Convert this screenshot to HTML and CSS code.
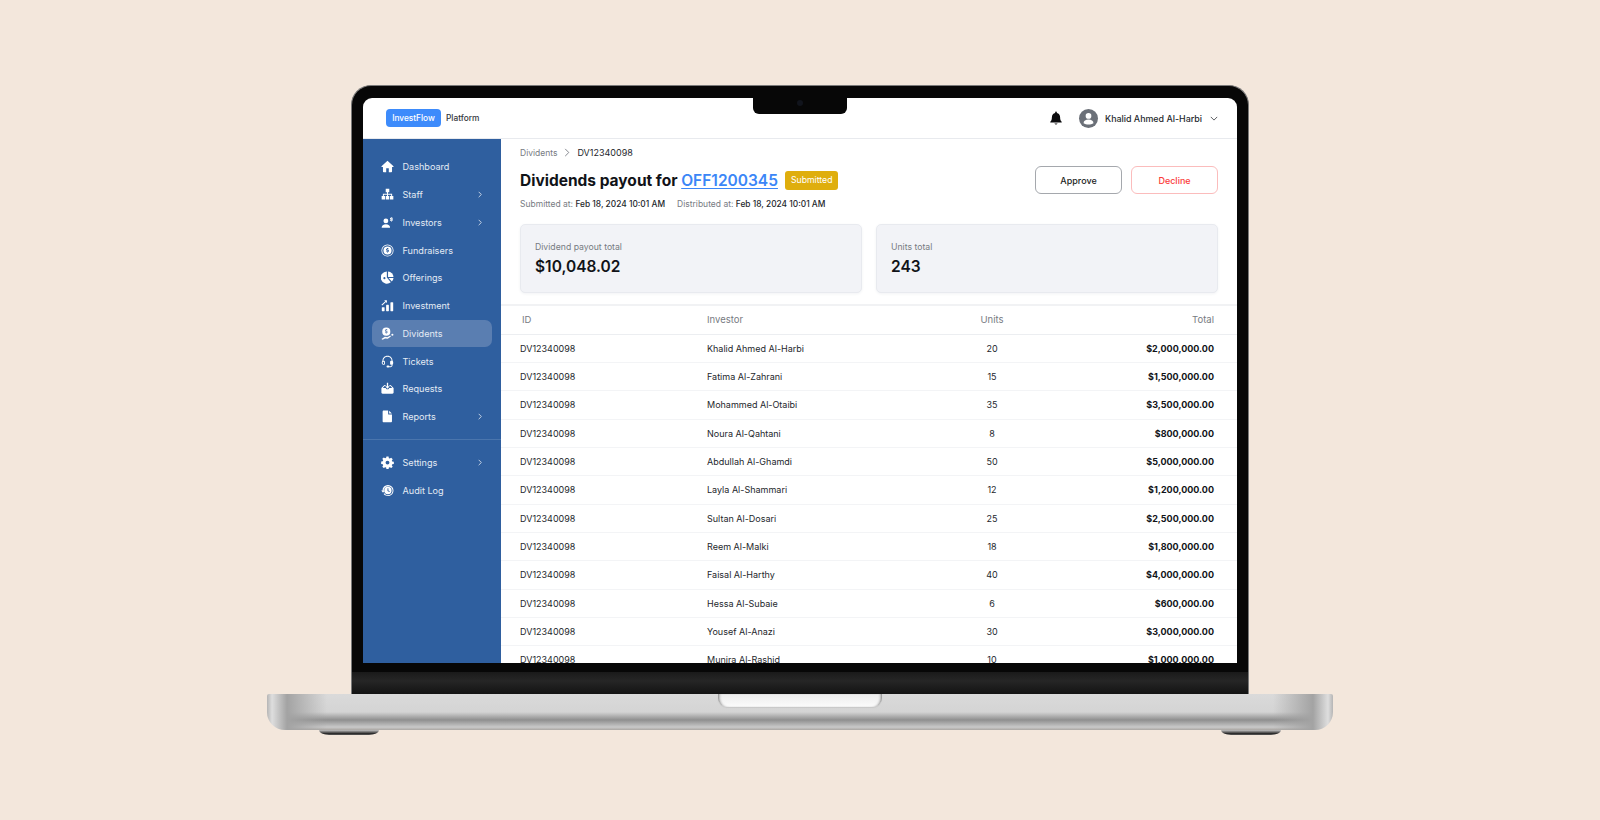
FILE: index.html
```html
<!DOCTYPE html>
<html lang="en">
<head>
    <meta charset="UTF-8">
    <title>InvestFlow Platform</title>
    <link rel="stylesheet" href="styles.css">
</head>
<body>
    <div class="laptop">
        <div class="lid">
            <div class="notch"><span class="camera"></span></div>
            <div class="screen">
                <header class="topbar">
                    <div class="brand">
                        <span class="brand-badge">InvestFlow</span>
                        <span class="brand-name">Platform</span>
                    </div>
                    <div class="topbar-right">
                        <svg class="bell" viewBox="0 0 16 16"><path d="M8 0.600c-.6 0-1 .4-1 1v.6C4.700 2.700 3.300 4.600 3.300 7c0 2.600-.6 3.800-1.800 5.200-.3.400-.1 1 .5 1h12c.6 0 .8-.6.5-1C13.300 10.800 12.700 9.600 12.700 7c0-2.400-1.400-4.300-3.700-4.800v-.6c0-.6-.4-1-1-1zM6.200 14.200a1.900 1.900 0 0 0 3.600 0z"/></svg>
                        <span class="avatar">
                            <svg viewBox="0 0 20 20"><circle cx="10" cy="7.300" r="3"/><path d="M4.800 15c0-2.800 2.300-4 5.200-4s5.200 1.200 5.200 4c-1.400.9-3.200 1.400-5.200 1.400s-3.800-.5-5.200-1.400z"/></svg>
                        </span>
                        <span class="user-name">Khalid Ahmed Al-Harbi</span>
                        <svg class="user-caret" viewBox="0 0 10 6"><path d="M1 1l4 4 4-4"/></svg>
                    </div>
                </header>
                <div class="app">
                    <nav class="sidebar">
                        <div class="nav-group">
                            <a class="nav-item">
                                <svg class="nav-icon" viewBox="0 0 16 16"><path d="M8 1L.6 7.700c-.3.300-.1.800.3.800H2.400V14c0 .5.400 1 1 1h3V10.300h3.200V15h3c.6 0 1-.5 1-1V8.500h1.500c.4 0 .6-.5.300-.8z"/></svg>
                                <span>Dashboard</span>
                            </a>
                            <a class="nav-item">
                                <svg class="nav-icon" viewBox="0 0 16 16"><path d="M5.800 1h4.400v4.200H8.600v2h5.100v2.600h1.500V14h-4.200V9.800h1.500V8.400H8.600v1.400h1.500V14H5.900V9.800h1.500V8.400H3.500v1.400H5V14H.8V9.800h1.500V7.200h5.100v-2H5.800z"/></svg>
                                <span>Staff</span>
                                <svg class="nav-arrow" viewBox="0 0 6 10"><path d="M1 1l4 4-4 4"/></svg>
                            </a>
                            <a class="nav-item">
                                <svg class="nav-icon" viewBox="0 0 16 16"><circle cx="6" cy="6" r="3"/><path d="M.8 14.500c0-3 2-4.500 5.200-4.500s5.200 1.500 5.200 4.500z"/><path d="M12.200 1.500h1.100v.8h1.200v1h-2c-.3 0-.3.400 0 .4h1c1.500 0 1.500 2.300 0 2.400v.8h-1.100v-.8H11v-1h2.200c.3 0 .3-.4 0-.4h-1c-1.500 0-1.500-2.300 0-2.400z"/></svg>
                                <span>Investors</span>
                                <svg class="nav-arrow" viewBox="0 0 6 10"><path d="M1 1l4 4-4 4"/></svg>
                            </a>
                            <a class="nav-item">
                                <svg class="nav-icon" viewBox="0 0 16 16"><path fill-rule="evenodd" d="M8 .5a7.500 7.500 0 1 1 0 15 7.500 7.500 0 0 1 0-15zm0 1a6.500 6.500 0 1 0 0 13 6.500 6.500 0 0 0 0-13zm0 1.500a5 5 0 1 1 0 10A5 5 0 0 1 8 3zm.6 1.800H7.400v.7c-1.800.3-1.700 2.600 0 2.800h1.100c.4 0 .4.500 0 .5H6.600v1h.8v.7h1.200v-.7c1.800-.3 1.700-2.600 0-2.800H7.500c-.4 0-.4-.5 0-.5h1.900v-1h-.8z"/></svg>
                                <span>Fundraisers</span>
                            </a>
                            <a class="nav-item">
                                <svg class="nav-icon" viewBox="0 0 16 16"><path fill-rule="evenodd" d="M7.200 .6v7.500l4.900 5.700A7.500 7.500 0 1 1 7.200 .6zM4.200 7.500a1.300 1.300 0 1 0 0 2.600 1.300 1.300 0 0 0 0-2.600z"/><path d="M8.700 .6a7 7 0 0 1 6.700 6.700H8.700z"/><path d="M9.300 8.700h6.100a7.400 7.400 0 0 1-2.100 4.300z"/></svg>
                                <span>Offerings</span>
                            </a>
                            <a class="nav-item">
                                <svg class="nav-icon" viewBox="0 0 16 16"><rect x="1" y="10" width="3.400" height="5" rx=".6"/><rect x="6.300" y="7" width="3.400" height="8" rx=".6"/><rect x="11.600" y="4" width="3.400" height="11" rx=".6"/><path d="M1 7.500l5-4.500" stroke="#fff" stroke-width="1.300" fill="none"/><path d="M3.900 1.500h3.300v3.300z"/></svg>
                                <span>Investment</span>
                            </a>
                            <a class="nav-item active">
                                <svg class="nav-icon" viewBox="0 0 16 16"><path fill-rule="evenodd" d="M6.500 .7a5 5 0 1 1 0 10 5 5 0 0 1 0-10zm.6 1.800H5.900v.6c-1.500.4-1.400 2.300 0 2.600l1.200.2c.3 0 .3.500 0 .5H5.200v1h.7v.6h1.200V7.400c1.500-.4 1.400-2.300 0-2.600l-1.200-.2c-.3 0-.3-.5 0-.5h1.900v-1h-.7z"/><path d="M.5 14.800l4.300-2.800 3 .6 3.200-1.800c.8-.4 1.500.6.800 1.200l-3.500 2.500-3.300-.5-3 1.800zM12.700 9.500a1.300 1.300 0 1 1 2.600 0 1.300 1.300 0 0 1-2.600 0z"/></svg>
                                <span>Dividents</span>
                            </a>
                            <a class="nav-item">
                                <svg class="nav-icon" viewBox="0 0 16 16"><path d="M8 1C4.300 1 1.800 3.700 1.800 7.300v.6h1.100v-.6C2.900 4.300 5 2.100 8 2.100s5.100 2.200 5.100 5.200v5c0 1-.7 1.600-1.600 1.600H9.900V15h1.600c1.600 0 2.700-1.100 2.700-2.700v-5C14.200 3.700 11.700 1 8 1z"/><path fill-rule="evenodd" d="M2.800 7.200h1c.6 0 1 .4 1 1v2.900c0 .6-.4 1-1 1h-1c-1 0-1.800-.8-1.800-1.800V9c0-1 .8-1.800 1.800-1.800zm.1 1.100c-.5 0-.8.300-.8.800v1.100c0 .5.300.8.800.8h.8V8.300zM12.200 7.200h1c1 0 1.800.8 1.800 1.800v1.300c0 1-.8 1.800-1.800 1.800h-1c-.6 0-1-.4-1-1V8.200c0-.6.4-1 1-1z"/><rect x="6.800" y="13" width="3.400" height="2.400" rx="1.200"/></svg>
                                <span>Tickets</span>
                            </a>
                            <a class="nav-item">
                                <svg class="nav-icon" viewBox="0 0 16 16"><path d="M7.200 1h1.600v4.200h1.900L8 8.200 5.300 5.200h1.900z"/><path d="M4.200 3.600h1.600v1H4.700L2.200 7.300h3.500L7 9h2l1.300-1.700h3.500l-2.500-2.700h-1.100v-1h1.600L15.500 7.500V13c0 .8-.6 1.500-1.500 1.500H2C1.100 14.500.5 13.800.5 13V7.500z"/></svg>
                                <span>Requests</span>
                            </a>
                            <a class="nav-item">
                                <svg class="nav-icon" viewBox="0 0 16 16"><path d="M3.300.7h5.500v4.200c0 .4.300.7.700.7h4v8.300c0 .7-.6 1.300-1.300 1.300H3.300c-.7 0-1.300-.6-1.300-1.300V2c0-.7.600-1.300 1.300-1.300z"/><path d="M10 .9l3.400 3.500H10z"/></svg>
                                <span>Reports</span>
                                <svg class="nav-arrow" viewBox="0 0 6 10"><path d="M1 1l4 4-4 4"/></svg>
                            </a>
                        </div>
                        <div class="nav-group nav-bottom">
                            <a class="nav-item">
                                <svg class="nav-icon" viewBox="0 0 16 16"><path fill-rule="evenodd" d="M6.700.7h2.600l.4 2 1.100.5 1.800-1.100 1.800 1.800-1.100 1.800.5 1.100 2 .4v2.600l-2 .4-.5 1.100 1.100 1.800-1.800 1.800-1.800-1.100-1.100.5-.4 2H6.700l-.4-2-1.100-.5-1.800 1.100-1.800-1.800 1.100-1.800-.5-1.100-2-.4V6.800l2-.4.5-1.100-1.100-1.800 1.800-1.800 1.800 1.100 1.100-.5zM8 5.700a2.400 2.400 0 1 0 0 4.800 2.400 2.400 0 0 0 0-4.800z"/></svg>
                                <span>Settings</span>
                                <svg class="nav-arrow" viewBox="0 0 6 10"><path d="M1 1l4 4-4 4"/></svg>
                            </a>
                            <a class="nav-item">
                                <svg class="nav-icon" viewBox="0 0 16 16"><path fill-rule="evenodd" d="M8.500 1.200a6.800 6.800 0 1 1-5.300 11l1-.8a5.500 5.500 0 1 0-1-3.400h1.500L2.500 10.800.3 8h1.500A6.800 6.800 0 0 1 8.500 1.200zm0 2.300a4.500 4.500 0 1 1 0 9 4.500 4.500 0 0 1 0-9zM8 5.200v3.300l2.300 1.400.6-.9-1.800-1.100V5.200z"/></svg>
                                <span>Audit Log</span>
                            </a>
                        </div>
                    </nav>
                    <main class="content">
                        <div class="page-head">
                            <div class="breadcrumb">
                                <span class="crumb">Dividents</span>
                                <svg class="crumb-sep" viewBox="0 0 6 10"><path d="M1 1l4 4-4 4"/></svg>
                                <span class="crumb-current">DV12340098</span>
                            </div>
                            <div class="title-row">
                                <div class="title-left">
                                    <h1>Dividends payout for <a class="offer-link">OFF1200345</a></h1>
                                    <span class="status">Submitted</span>
                                </div>
                                <div class="actions">
                                    <button class="btn btn-approve">Approve</button>
                                    <button class="btn btn-decline">Decline</button>
                                </div>
                            </div>
                            <div class="meta">
                                <span>Submitted at: <b>Feb 18, 2024 10:01 AM</b></span>
                                <span>Distributed at: <b>Feb 18, 2024 10:01 AM</b></span>
                            </div>
                            <div class="cards">
                                <div class="card">
                                    <div class="card-label">Dividend payout total</div>
                                    <div class="card-value">$10,048.02</div>
                                </div>
                                <div class="card">
                                    <div class="card-label">Units total</div>
                                    <div class="card-value">243</div>
                                </div>
                            </div>
                        </div>
                        <table class="payouts">
                            <colgroup>
                                <col class="col-id">
                                <col class="col-investor">
                                <col class="col-units">
                                <col class="col-total">
                            </colgroup>
                            <thead>
                                <tr><th class="th-id">ID</th><th>Investor</th><th class="center">Units</th><th class="right">Total</th></tr>
                            </thead>
                            <tbody>
                                <tr><td>DV12340098</td><td>Khalid Ahmed Al-Harbi</td><td class="center">20</td><td class="right amount">$2,000,000.00</td></tr>
                                <tr><td>DV12340098</td><td>Fatima Al-Zahrani</td><td class="center">15</td><td class="right amount">$1,500,000.00</td></tr>
                                <tr><td>DV12340098</td><td>Mohammed Al-Otaibi</td><td class="center">35</td><td class="right amount">$3,500,000.00</td></tr>
                                <tr><td>DV12340098</td><td>Noura Al-Qahtani</td><td class="center">8</td><td class="right amount">$800,000.00</td></tr>
                                <tr><td>DV12340098</td><td>Abdullah Al-Ghamdi</td><td class="center">50</td><td class="right amount">$5,000,000.00</td></tr>
                                <tr><td>DV12340098</td><td>Layla Al-Shammari</td><td class="center">12</td><td class="right amount">$1,200,000.00</td></tr>
                                <tr><td>DV12340098</td><td>Sultan Al-Dosari</td><td class="center">25</td><td class="right amount">$2,500,000.00</td></tr>
                                <tr><td>DV12340098</td><td>Reem Al-Malki</td><td class="center">18</td><td class="right amount">$1,800,000.00</td></tr>
                                <tr><td>DV12340098</td><td>Faisal Al-Harthy</td><td class="center">40</td><td class="right amount">$4,000,000.00</td></tr>
                                <tr><td>DV12340098</td><td>Hessa Al-Subaie</td><td class="center">6</td><td class="right amount">$600,000.00</td></tr>
                                <tr><td>DV12340098</td><td>Yousef Al-Anazi</td><td class="center">30</td><td class="right amount">$3,000,000.00</td></tr>
                                <tr><td>DV12340098</td><td>Munira Al-Rashid</td><td class="center">10</td><td class="right amount">$1,000,000.00</td></tr>
                            </tbody>
                        </table>
                    </main>
                </div>
            </div>
            <div class="chin"></div>
            <div class="hinge"></div>
        </div>
        <div class="base">
            <span class="base-notch"></span>
        </div>
        <div class="feet">
            <span class="foot"></span>
            <span class="foot"></span>
        </div>
    </div>
</body>
</html>
```

FILE: styles.css
```css
* {
    box-sizing: border-box;
}
html, body {
    height: 100%;
}
body {
    margin: 0;
    padding-top: 85px;
    background-color: #f3e7dc;
    font-family: Inter, "Liberation Sans", sans-serif;
    color: #16181d;
    overflow: hidden;
}

/* laptop frame */
.laptop {
    display: flex;
    flex-direction: column;
    align-items: center;
}
.lid {
    position: relative;
    width: 898px;
    padding: 12px 11px 0;
    background-color: #070707;
    border: 1px solid #7a7a7a;
    border-bottom: none;
    border-radius: 20px 20px 0 0;
}
.notch {
    position: absolute;
    top: 0;
    left: 401px;
    width: 94px;
    height: 28px;
    background-color: #070707;
    border-radius: 0 0 6px 6px;
    display: flex;
    justify-content: center;
    padding-top: 14px;
    z-index: 5;
}
.camera {
    width: 6px;
    height: 6px;
    border-radius: 50%;
    background-color: #11141c;
}
.screen {
    height: 565px;
    background-color: #fff;
    border-radius: 9px 9px 0 0;
    overflow: hidden;
    display: flex;
    flex-direction: column;
}
.chin {
    height: 9px;
    margin: 0 -11px;
    background-color: #070707;
}
.hinge {
    height: 22px;
    margin: 0 -11px;
    background: linear-gradient(#1a1a1a, #262626 40%, #131313);
}
.base {
    position: relative;
    width: 1066px;
    height: 36px;
    border-radius: 2px 2px 18px 18px;
    background:
        linear-gradient(90deg, #b5b5b5 0, #dedede 5px, #a3a3a3 20px, rgba(200, 200, 200, 0) 60px, rgba(200, 200, 200, 0) 1006px, #a3a3a3 1046px, #dedede 1061px, #b5b5b5 100%),
        linear-gradient(#dadada 0, #d4d4d4 50%, #8f8f8f 72%, #c9c9c9 92%, #aaa6a2 100%);
}
.base-notch {
    position: absolute;
    top: 0;
    left: 451px;
    width: 164px;
    height: 13px;
    background: linear-gradient(#ececec, #fbfbfb);
    border-radius: 0 0 9px 9px;
    box-shadow: inset 3px 0 3px -2px #777, inset -3px 0 3px -2px #777, 0 1px 1px #c8c8c8;
}
.feet {
    width: 1066px;
    display: flex;
    justify-content: space-between;
    padding: 0 52px;
}
.foot {
    width: 60px;
    height: 5px;
    background: linear-gradient(#c4c4c4, #2d2d2d 70%, #5a5a5a);
    border-radius: 0 0 10px 10px / 0 0 5px 5px;
}

/* topbar */
.topbar {
    flex: none;
    height: 41px;
    display: flex;
    align-items: center;
    justify-content: space-between;
    padding: 0 19px 0 23px;
    border-bottom: 1px solid #e8eaee;
}
.brand {
    display: flex;
    align-items: center;
    gap: 5px;
}
.brand-badge {
    width: 55px;
    height: 18px;
    display: flex;
    align-items: center;
    justify-content: center;
    background-color: #3d8bfb;
    color: #fff;
    border-radius: 4px;
    font-size: 8.300px;
    font-weight: 500;
}
.brand-name {
    font-size: 8.300px;
    font-weight: 500;
    color: #33363c;
}
.topbar-right {
    display: flex;
    align-items: center;
}
.bell {
    width: 14px;
    height: 14px;
    fill: #0c0c0e;
    margin-right: 16px;
}
.avatar {
    width: 19px;
    height: 19px;
    border-radius: 50%;
    background-color: #6b7078;
    margin-right: 7px;
}
.avatar svg {
    display: block;
    width: 19px;
    height: 19px;
    fill: #fff;
}
.user-name {
    font-size: 8.900px;
    font-weight: 500;
    color: #24272c;
    margin-right: 8px;
}
.user-caret {
    width: 8px;
    height: 5px;
    fill: none;
    stroke: #33363c;
    stroke-width: 1;
}

/* sidebar */
.app {
    flex: 1;
    display: flex;
    min-height: 0;
}
.sidebar {
    flex: none;
    width: 138px;
    background-color: #2f5f9f;
    padding-top: 14px;
}
.nav-group {
    padding: 0 9px;
}
.nav-bottom {
    margin-top: 8.500px;
    padding-top: 9px;
    border-top: 1px solid #4a75ad;
}
.nav-item {
    height: 27.750px;
    display: flex;
    align-items: center;
    padding: 0 10px 0 9px;
    border-radius: 7px;
    color: #e4ebf4;
    font-size: 9.100px;
}
.nav-item span {
    flex: 1;
}
.nav-item.active {
    background-color: #5a7eb1;
}
.nav-icon {
    width: 13px;
    height: 13px;
    fill: #fff;
    margin-right: 8.500px;
    flex: none;
}
.nav-arrow {
    width: 4px;
    height: 7px;
    fill: none;
    stroke: #e4ebf4;
    stroke-width: 1.200;
}

/* page head */
.content {
    flex: 1;
    min-width: 0;
    overflow: hidden;
}
.page-head {
    height: 167px;
    padding: 0 19px;
    border-bottom: 2px solid #f1f2f4;
}
.breadcrumb {
    height: 27px;
    display: flex;
    align-items: center;
    gap: 7px;
    font-size: 8.500px;
    color: #777b82;
}
.crumb-sep {
    width: 6px;
    height: 9px;
    fill: none;
    stroke: #777b82;
    stroke-width: 1;
}
.crumb-current {
    font-size: 9px;
    color: #24272c;
}
.title-row {
    height: 28px;
    display: flex;
    align-items: center;
    justify-content: space-between;
}
.title-left {
    display: flex;
    align-items: center;
    gap: 7px;
}
h1 {
    margin: 0;
    font-size: 15.500px;
    font-weight: 700;
    color: #111318;
}
.offer-link {
    color: #3b86f7;
    font-weight: 600;
    text-decoration: underline;
    text-decoration-thickness: 1px;
    text-underline-offset: 2px;
}
.status {
    height: 19px;
    padding: 0 6px;
    display: flex;
    align-items: center;
    background-color: #dfae0d;
    color: #fff;
    border-radius: 3px;
    font-size: 8.700px;
}
.actions {
    display: flex;
    gap: 9px;
}
.btn {
    width: 87px;
    height: 28px;
    background-color: #fff;
    border-radius: 6px;
    font-family: inherit;
    font-size: 9px;
    font-weight: 500;
}
.btn-approve {
    border: 1px solid #a5a8ad;
    color: #1c1e22;
}
.btn-decline {
    border: 1px solid #fbbcbc;
    color: #fb3b3b;
}
.meta {
    height: 20px;
    display: flex;
    align-items: center;
    gap: 12px;
    font-size: 8.500px;
    color: #777b82;
}
.meta b {
    font-size: 8.400px;
    font-weight: 500;
    color: #24272c;
}
.cards {
    margin-top: 10px;
    display: flex;
    gap: 14px;
}
.card {
    flex: 1;
    height: 69px;
    padding: 17px 14px 0;
    background-color: #f2f3f7;
    border: 1px solid #e8eaef;
    border-radius: 5px;
    box-shadow: 0 1px 3px rgba(40, 50, 80, 0.06);
}
.card-label {
    font-size: 8.700px;
    color: #777b82;
}
.card-value {
    margin-top: 5px;
    font-size: 15.500px;
    font-weight: 600;
    color: #111318;
}

/* table */
.payouts {
    width: 100%;
    table-layout: fixed;
    border-collapse: collapse;
    font-size: 9px;
}
.col-id { width: 206px; }
.col-investor { width: 223px; }
.col-units { width: 124px; }
.payouts th {
    height: 28px;
    padding: 0;
    text-align: left;
    font-size: 9.500px;
    font-weight: 400;
    color: #777b82;
    border-bottom: 1px solid #eceef1;
}
.payouts th.th-id {
    padding-left: 21px;
}
.payouts td {
    height: 28.350px;
    padding: 0;
    color: #24272c;
    border-bottom: 1px solid #f3f4f6;
}
.payouts td:first-child {
    padding-left: 19px;
}
.payouts .center {
    text-align: center;
}
.payouts .right {
    text-align: right;
    padding-right: 23px;
}
.payouts .amount {
    font-weight: 700;
    color: #111318;
}
```
